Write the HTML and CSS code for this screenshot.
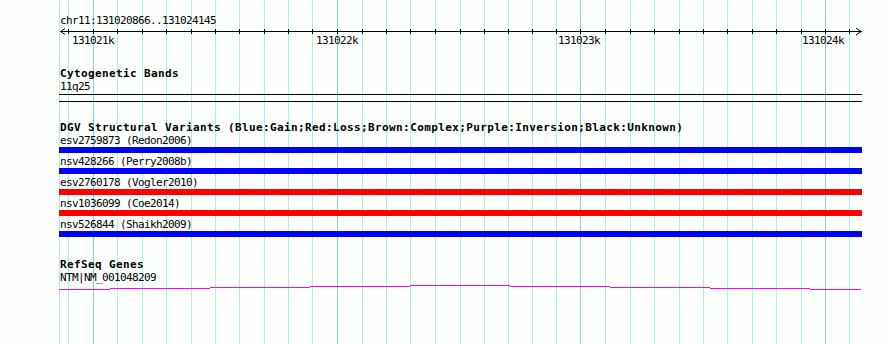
FILE: index.html
```html
<!DOCTYPE html>
<html lang="en">
<head>
    <meta charset="UTF-8">
    <title>chr11:131020866..131024145</title>
    <link rel="stylesheet" href="styles.css">
</head>
<body>
    <div class="browser">
        <!-- grid lines behind the tracks -->
        <svg class="grid" width="890" height="344" id="grid"></svg>

        <div class="region">chr11:131020866..131024145</div>
        <svg class="scale" width="803" height="20" id="scale">
            <line class="axis" x1="1" y1="4.5" x2="803" y2="4.5"/>
            <polyline class="axis" points="6,1.5 1.5,4.5 6,7.5"/>
            <polyline class="axis" points="797,1 802,4.5 797,8"/>
            <text class="scale-label" x="13" y="16.5">131021k</text>
            <text class="scale-label" x="257" y="16.5">131022k</text>
            <text class="scale-label" x="499" y="16.5">131023k</text>
            <text class="scale-label" x="743" y="16.5">131024k</text>
        </svg>

        <div class="track">
            <div class="track-title">Cytogenetic Bands</div>
            <div class="feature-name">11q25</div>
            <div class="band"></div>
        </div>

        <div class="track track-dgv">
            <div class="track-title">DGV Structural Variants (Blue:Gain;Red:Loss;Brown:Complex;Purple:Inversion;Black:Unknown)</div>
            <div class="feature">
                <div class="feature-name">esv2759873 (Redon2006)</div>
                <div class="bar gain"></div>
            </div>
            <div class="feature">
                <div class="feature-name">nsv428266 (Perry2008b)</div>
                <div class="bar gain"></div>
            </div>
            <div class="feature">
                <div class="feature-name">esv2760178 (Vogler2010)</div>
                <div class="bar loss"></div>
            </div>
            <div class="feature">
                <div class="feature-name">nsv1036099 (Coe2014)</div>
                <div class="bar loss"></div>
            </div>
            <div class="feature">
                <div class="feature-name">nsv526844 (Shaikh2009)</div>
                <div class="bar gain"></div>
            </div>
        </div>

        <div class="track track-genes">
            <div class="track-title">RefSeq Genes</div>
            <div class="feature-name">NTM|NM_001048209</div>
            <svg class="gene" width="803" height="7">
                <rect x="0" y="5" width="51" height="1"/>
                <rect x="51" y="4" width="100" height="1"/>
                <rect x="151" y="3" width="100" height="1"/>
                <rect x="251" y="2" width="100" height="1"/>
                <rect x="351" y="1" width="100" height="1"/>
                <rect x="451" y="2" width="100" height="1"/>
                <rect x="551" y="3" width="100" height="1"/>
                <rect x="651" y="4" width="100" height="1"/>
                <rect x="751" y="5" width="51" height="1"/>
            </svg>
        </div>
    </div>

    <script>
        // Tick positions (page x), every 100 bp; majors carry a label
        var ticks = [68, 93, 117, 142, 166, 191, 215, 239, 264, 288, 312, 337, 362, 386,
            410, 435, 460, 484, 508, 532, 556, 580, 605, 630, 654, 679, 703, 727, 752,
            776, 801, 825, 849];
        var majors = [93, 337, 580, 825];
        var ns = 'http://www.w3.org/2000/svg';

        var grid = document.getElementById('grid');
        var scale = document.getElementById('scale');

        function addLine(svg, cls, x1, y1, x2, y2) {
            var line = document.createElementNS(ns, 'line');
            line.setAttribute('class', cls);
            line.setAttribute('x1', x1);
            line.setAttribute('y1', y1);
            line.setAttribute('x2', x2);
            line.setAttribute('y2', y2);
            svg.appendChild(line);
        }

        // left edge of the panel
        addLine(grid, 'grid-minor', 59.5, 0, 59.5, 344);

        ticks.forEach(function(x) {
            var cls = majors.indexOf(x) >= 0 ? 'grid-major' : 'grid-minor';
            addLine(grid, cls, x + 0.5, 0, x + 0.5, 344);
            addLine(scale, 'axis', x - 59 + 0.5, 2, x - 59 + 0.5, 7);
        });
    </script>
</body>
</html>
```

FILE: styles.css
```css
* {
    margin: 0;
    padding: 0;
    box-sizing: border-box;
}
body {
    background-color: #fdfffd;
    font-family: "DejaVu Sans Mono", "Liberation Mono", monospace;
    font-size: 11px;
    line-height: 13px;
    color: #000;
}
.browser {
    position: relative;
    width: 890px;
    height: 344px;
    padding-left: 59px;
    overflow: hidden;
}
.grid {
    position: absolute;
    left: 0;
    top: 0;
}
.grid-minor {
    stroke: #afecec;
    stroke-width: 1;
}
.grid-major {
    stroke: #86cbea;
    stroke-width: 1;
}
.region,
.scale,
.track {
    position: relative;
}
.region {
    margin-top: 14px;
    height: 13px;
    letter-spacing: -0.62px;
    padding-left: 1px;
}
.scale {
    display: block;
}
.axis {
    stroke: #000;
    stroke-width: 1;
    fill: none;
}
.scale-label {
    font-family: "DejaVu Sans Mono", "Liberation Mono", monospace;
    font-size: 11px;
    letter-spacing: -0.62px;
    fill: #000;
}
.track {
    width: 803px;
    margin-top: 20px;
}
.track-dgv {
    margin-top: 19px;
}
.track-genes {
    margin-top: 19px;
}
.track-title {
    height: 13px;
    font-weight: bold;
    letter-spacing: 0.38px;
    white-space: nowrap;
    padding-left: 1px;
}
.feature-name {
    height: 13px;
    letter-spacing: -0.62px;
    white-space: nowrap;
    padding-left: 1px;
}
.band {
    margin-top: 1px;
    height: 8px;
    border-top: 1px solid #000;
    border-bottom: 1px solid #000;
}
.feature {
    height: 21px;
}
.bar {
    height: 6px;
}
.gain {
    background-color: #0000ff;
}
.loss {
    background-color: #ff0000;
}
.gene {
    display: block;
    fill: #ff00ff;
}
```
